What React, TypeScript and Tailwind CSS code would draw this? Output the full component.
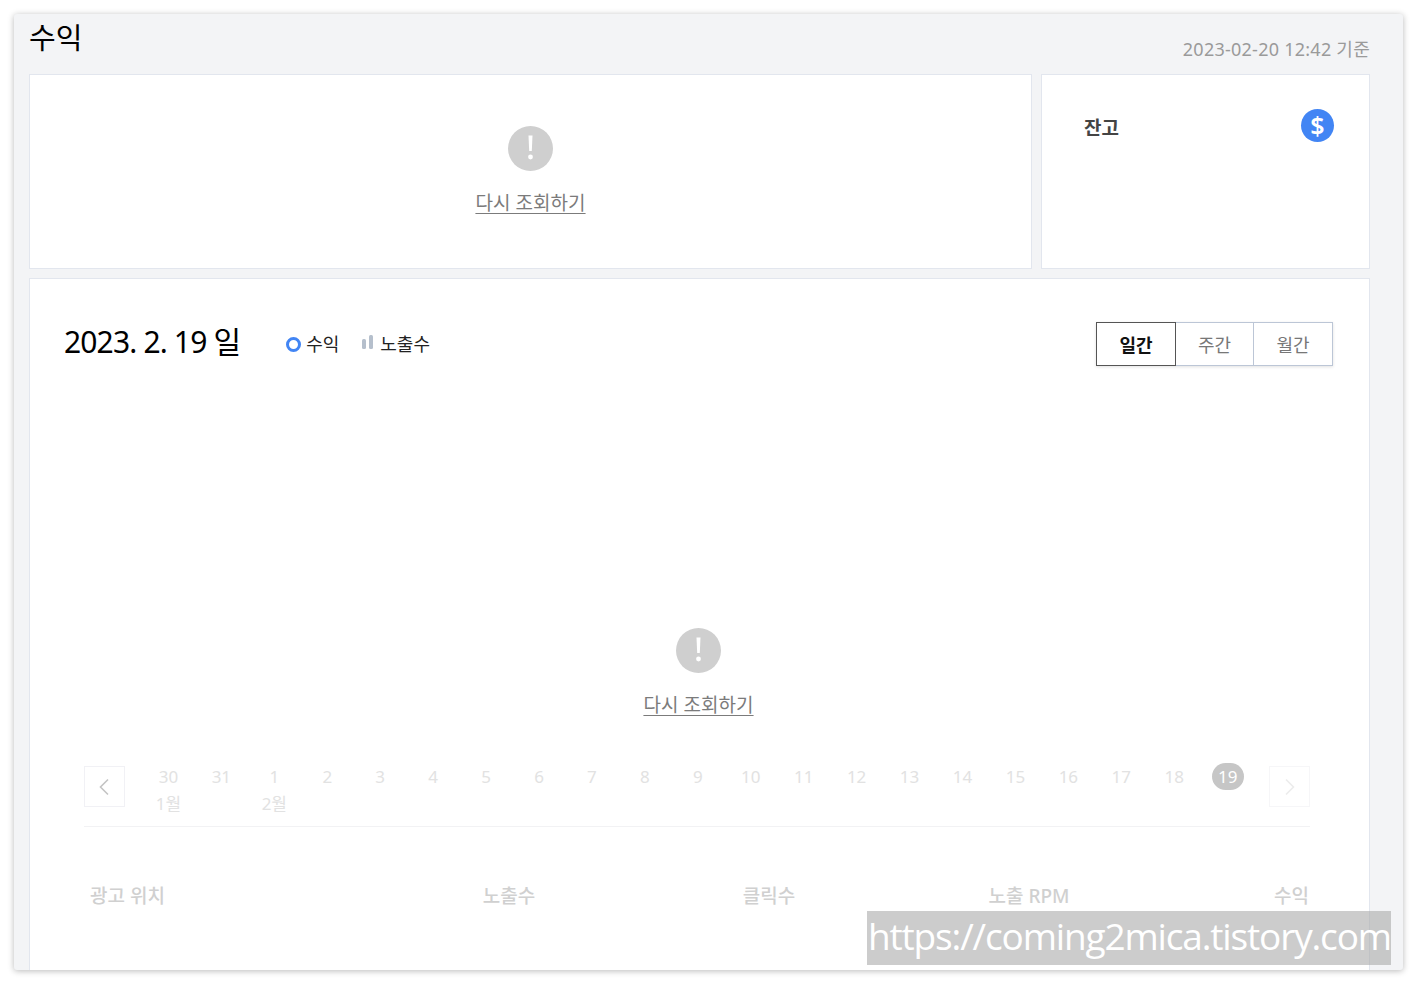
const FONT = "font-['Noto_Sans','Noto_Sans_CJK_KR',sans-serif]";

function Retry({ className = "" }: { className?: string }) {
  return (
    <div className={`flex flex-col items-center ${className}`}>
      <svg width="45" height="45" viewBox="0 0 45 45">
        <circle cx="22.5" cy="22.5" r="22.5" fill="#cfcfcf" />
        <path d="M20.5 9.5h4l-.7 15.5h-2.6z" fill="#fff" />
        <circle cx="22.5" cy="31" r="2.4" fill="#fff" />
      </svg>
      <a className="mt-[19px] text-[19px] leading-[26px] text-[#7b7b7b] underline underline-offset-[3px] tracking-[0.05px]">다시 조회하기</a>
    </div>
  );
}

const days = ["30", "31", "1", "2", "3", "4", "5", "6", "7", "8", "9", "10", "11", "12", "13", "14", "15", "16", "17", "18"];
const months: Record<string, string> = { "30": "1월", "1": "2월" };

export default function App() {
  return (
    <div className={`${FONT} w-[1418px] h-[985px] bg-white pt-[14px] pl-[14px] overflow-hidden relative`}>
      <div className="w-[1389px] h-[956px] bg-[#f3f4f6] rounded-[3px] shadow-[0_1px_6px_rgba(0,0,0,0.28)] pl-[15px] pr-[33px] overflow-hidden">
        <div className="flex justify-between h-[60px]">
          <h1 className="text-[29px] leading-[48px] text-black font-normal">수익</h1>
          <span className="mt-[22px] text-[18px] leading-[26px] text-[#9a9a9a] tracking-[0.25px]">2023-02-20 12:42 기준</span>
        </div>
        <div className="flex gap-[9px] h-[195px]">
          <div className="w-[1003px] bg-white border border-[#e2e6ee] pt-[51px]">
            <Retry />
          </div>
          <div className="w-[329px] bg-white border border-[#e2e6ee] pl-[42px] pr-[35px] pt-[34px] flex justify-between items-start">
            <span className="text-[19px] leading-[38px] font-bold text-[#444]">잔고</span>
            <span className="w-[33px] h-[33px] rounded-full bg-[#4285f4] text-white flex items-center justify-center text-[25px] leading-none font-semibold">$</span>
          </div>
        </div>
        <div className="mt-[9px] h-[700px] bg-white border border-[#e2e6ee] pl-[34px] pr-[36px]">
          <div className="flex items-start pt-[43px] h-[349px]">
            <span className="text-[30px] leading-[40px] text-black tracking-[-0.85px]">2023. 2. 19 일</span>
            <span className="ml-[46px] mt-[10px] flex items-center text-[18px] leading-[24px] text-[#222]">
              <span className="w-[15px] h-[15px] rounded-full border-[3px] border-[#4285f4] mr-[5px]" />
              수익
            </span>
            <span className="ml-[23px] mt-[10px] flex items-center text-[18px] leading-[24px] text-[#222]">
              <svg width="12" height="15" viewBox="0 0 12 15" className="mr-[6px] mt-[-4px]">
                <rect x="0" y="4" width="4" height="10" rx="1.5" fill="#b5bfcc" />
                <rect x="7" y="0" width="4" height="14" rx="1.5" fill="#b5bfcc" />
              </svg>
              노출수
            </span>
            <div className="ml-auto flex h-[44px] text-[18px] shadow-[0_1px_3px_rgba(0,0,0,0.12)]">
              <div className="w-[80px] pt-[2px] border border-[#555] flex items-center justify-center font-bold text-[#111]">일간</div>
              <div className="w-[78px] pt-[2px] border-y border-r border-[#bcc6d6] flex items-center justify-center text-[#777]">주간</div>
              <div className="w-[79px] pt-[2px] border-y border-r border-[#bcc6d6] flex items-center justify-center text-[#777]">월간</div>
            </div>
          </div>
          <div className="h-[99px]">
            <Retry />
          </div>
          <div className="ml-[20px] mr-[23px] mt-[-3px]">
            <div className="mt-[42px] flex h-[60px] border-b border-[#f2f2f4] box-content">
              <div className="w-[41px] h-[41px] border border-[#f1f1f5] flex items-center justify-center">
                <svg width="12" height="18" viewBox="0 0 12 18" fill="none" stroke="#c4c4c4" strokeWidth="1.6"><path d="M10 1.5 2.5 9l7.5 7.5" /></svg>
              </div>
              <div className="flex w-[1113px] ml-[17px]">
                {days.map((d) => (
                  <div key={d} className="w-[52.95px] flex flex-col items-center text-[17px] text-[#e2e2e2] leading-[26px]">
                    <span className="h-[26px] mt-[-2px]">{d}</span>
                    {months[d] && <span className="mt-[1px] whitespace-nowrap">{months[d]}</span>}
                  </div>
                ))}
                <div className="w-[52.95px] flex justify-center">
                  <span className="w-[32px] h-[27px] mt-[-3px] ml-[1px] rounded-full bg-[#c6c6c6] text-white text-[17px] leading-[27px] text-center">19</span>
                </div>
              </div>
              <div className="w-[41px] h-[41px] ml-[15px] border border-[#f6f6f8] flex items-center justify-center">
                <svg width="12" height="18" viewBox="0 0 12 18" fill="none" stroke="#ececec" strokeWidth="1.6"><path d="M2 1.5 9.5 9 2 16.5" /></svg>
              </div>
            </div>
            <div className="mt-[55px] flex text-[19px] leading-[28px] text-[#d0d0d0] font-medium">
              <div className="w-[295px] pl-[6px]">광고 위치</div>
              <div className="w-[260px] text-center">노출수</div>
              <div className="w-[260px] text-center">클릭수</div>
              <div className="w-[260px] text-center">노출 RPM</div>
              <div className="w-[151px] text-right pr-[1px]">수익</div>
            </div>
          </div>
        </div>
      </div>
      <div className="absolute left-[867px] top-[911px] w-[524px] h-[54px] bg-[rgba(170,170,170,0.6)] text-white text-[37px] leading-[50px] font-['Open_Sans',sans-serif] whitespace-nowrap tracking-[-1.15px] pl-[1px]">https://coming2mica.tistory.com</div>
    </div>
  );
}
